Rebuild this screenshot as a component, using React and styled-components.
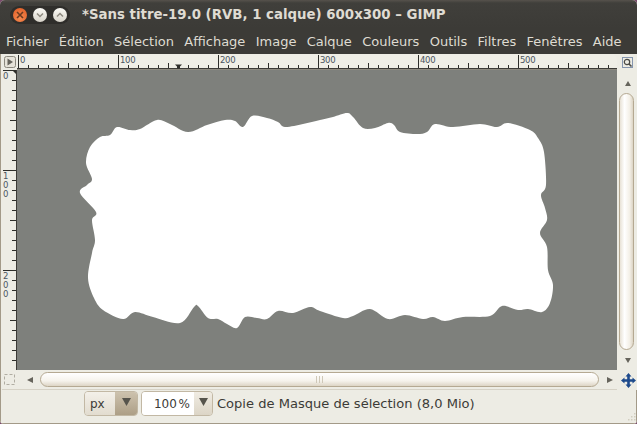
import React from 'react'
import styled, { createGlobalStyle } from 'styled-components'

const GlobalStyle = createGlobalStyle`
  html, body {
    margin: 0;
    padding: 0;
    width: 637px;
    height: 424px;
    overflow: hidden;
    background: #7a4b6c;
  }
`

const Window = styled.div`
  width: 637px;
  height: 424px;
  box-sizing: border-box;
  display: flex;
  flex-direction: column;
  background: #edece4;
  border-radius: 5px 5px 4px 4px;
  overflow: hidden;
  font-family: "DejaVu Sans", sans-serif;
`

const TitleBar = styled.div`
  height: 28px;
  flex: none;
  display: flex;
  align-items: center;
  background: linear-gradient(#56524c 0, #403f3b 3px, #3c3b37 100%);
`

const WindowButtons = styled.div`
  width: 60px;
  height: 18px;
  margin-left: 10px;
  margin-top: 1px;
  border-radius: 9px;
  background: #2f2e2b;
  display: flex;
  align-items: center;
  justify-content: space-between;
  padding: 0 3px;
  box-sizing: border-box;
`

const RoundButton = styled.div`
  width: 14px;
  height: 14px;
  border-radius: 50%;
  display: flex;
  align-items: center;
  justify-content: center;
  background: ${p => p.$close
    ? 'radial-gradient(circle at 50% 70%, #f58a4f, #df5a24)'
    : 'linear-gradient(#fbfaf5, #d8d4ca)'};
`

const Title = styled.div`
  margin-left: 12px;
  margin-top: 1px;
  color: #dfdbd2;
  font-size: 13.33px;
  font-weight: bold;
  white-space: nowrap;
`

const MenuBar = styled.div`
  height: 26px;
  flex: none;
  display: flex;
  align-items: center;
  gap: 10.3px;
  padding-left: 6px;
  background: #3c3b37;
`

const MenuItem = styled.span`
  color: #dfdbd2;
  font-size: 13px;
  white-space: nowrap;
`

const Workspace = styled.div`
  display: grid;
  grid-template-columns: 15px 600px 20px;
  grid-template-rows: 16px 300px 20px;
  flex: none;
  padding-left: 2px;
  box-shadow: inset 1px 0 0 #a39a88;
`

const RulerCorner = styled.div`
  display: flex;
  align-items: center;
  justify-content: center;
`

const RulerSvg = styled.svg`
  display: block;
  font-family: "DejaVu Sans", sans-serif;
  font-size: 8.5px;
  letter-spacing: -0.3px;
`

const ZoomCell = styled.div`
  display: flex;
  align-items: center;
  justify-content: center;
`

const Canvas = styled.div`
  background: #7e807c;
  width: 600px;
  height: 300px;
`

const VScroll = styled.div`
  display: flex;
  flex-direction: column;
  align-items: center;
  padding-top: 11px;
  padding-left: 1px;
  box-sizing: border-box;
`

const VThumb = styled.div`
  width: 15px;
  height: 257px;
  margin-top: 7px;
  margin-bottom: 8px;
  margin-left: -2px;
  flex: none;
  box-sizing: border-box;
  border: 1px solid #b5a992;
  border-radius: 8px;
  background: linear-gradient(90deg, #e8e2d6, #ffffff 35%, #f3efe6 75%, #dcd4c4);
`

const QuickMask = styled.div`
  display: flex;
  align-items: center;
  justify-content: center;
  height: 20px;
  box-sizing: border-box;
  border-bottom: 1px solid #d6d2c6;
`

const HScroll = styled.div`
  display: flex;
  align-items: center;
  padding-left: 10px;
  border-bottom: 1px solid #d6d2c6;
  height: 20px;
  box-sizing: border-box;
`

const HThumb = styled.div`
  width: 559px;
  height: 15px;
  margin: 0 8px 0 7px;
  flex: none;
  box-sizing: border-box;
  border: 1px solid #b5a992;
  border-radius: 8px;
  background: linear-gradient(#ffffff, #f6f3ec 60%, #ddd5c5);
  display: flex;
  align-items: center;
  justify-content: center;
`

const Grip = styled.div`
  width: 7px;
  height: 7px;
  background: repeating-linear-gradient(90deg, #cfc8b8 0 1px, transparent 1px 3px);
`

const NavCell = styled.div`
  display: flex;
  align-items: center;
  justify-content: center;
  padding-left: 2px;
`

const StatusBar = styled.div`
  flex: 1;
  display: flex;
  align-items: flex-start;
  padding: 1px 0 0 84px;
  border-bottom: 1px solid #a39a88;
  box-shadow: inset 1px 0 0 #a39a88, inset -1px 0 0 #a39a88;
  color: #3c3b37;
  font-size: 13.05px;
`

const Combo = styled.div`
  display: flex;
  height: 25px;
  width: ${p => p.$width}px;
  margin-right: ${p => p.$gap}px;
  box-sizing: border-box;
  border: 1px solid #c2b8a4;
  border-radius: 4px;
  overflow: hidden;
`

const ComboEntry = styled.div`
  flex: 1;
  display: flex;
  align-items: center;
  justify-content: ${p => (p.$right ? 'flex-end' : 'flex-start')};
  padding: 0 4px 0 5px;
  background: ${p => (p.$right ? '#ffffff' : 'linear-gradient(#f3f0e9, #e2dccf)')};
  font-size: 12px;
  word-spacing: -2px;
  white-space: nowrap;
`

const ComboArrow = styled.div`
  width: ${p => p.$width}px;
  display: flex;
  align-items: center;
  justify-content: center;
  padding-bottom: 4px;
  box-sizing: border-box;
  background: ${p => (p.$dark
    ? 'linear-gradient(#cdc2ae, #ad9f86)'
    : 'linear-gradient(#f0ece3, #dcd5c6)')};
`

const StatusText = styled.div`
  line-height: 25px;
  white-space: nowrap;
`

const ResizeGrip = styled.svg`
  margin-left: auto;
  align-self: flex-end;
  flex: none;
`

// outline of the selection, in page coordinates
const BLOB = [
  [80, 193], [87, 185], [92, 179], [86, 163], [90, 147], [100, 137], [110, 135], [117, 127],
  [130, 130], [140, 129], [157, 120], [170, 124], [188, 132], [207, 125], [225, 120], [235, 121],
  [243, 127], [252, 116], [267, 118], [278, 122], [285, 127], [303, 124], [320, 120], [333, 117],
  [347, 113], [353, 117], [363, 128], [375, 128], [388, 123], [394, 125], [400, 132], [417, 134],
  [427, 132], [435, 124], [453, 127], [480, 124], [497, 127], [508, 123], [530, 130], [538, 138],
  [544, 152], [546, 185], [541, 195], [545, 208], [547, 220], [540, 233], [547, 247], [548, 270],
  [553, 285], [550, 303], [542, 312], [528, 309], [518, 310], [502, 306], [490, 316], [463, 317],
  [445, 321], [433, 317], [423, 319], [405, 315], [388, 319], [370, 309], [353, 316], [343, 318],
  [320, 311], [310, 307], [293, 313], [278, 311], [267, 319], [257, 318], [245, 317], [237, 328],
  [227, 324], [218, 319], [208, 318], [198, 306], [194, 307], [180, 323], [153, 317], [135, 312],
  [123, 319], [103, 310], [94, 298], [88, 278], [92, 253], [95, 240], [92, 220], [96, 212],
]

const smoothPath = pts => {
  const n = pts.length
  let d = `M${pts[0][0]} ${pts[0][1]}`
  for (let i = 0; i < n; i++) {
    const p0 = pts[(i - 1 + n) % n]
    const p1 = pts[i]
    const p2 = pts[(i + 1) % n]
    const p3 = pts[(i + 2) % n]
    const c1 = [p1[0] + (p2[0] - p0[0]) / 6, p1[1] + (p2[1] - p0[1]) / 6]
    const c2 = [p2[0] - (p3[0] - p1[0]) / 6, p2[1] - (p3[1] - p1[1]) / 6]
    d += `C${c1[0].toFixed(1)} ${c1[1].toFixed(1)} ${c2[0].toFixed(1)} ${c2[1].toFixed(1)} ${p2[0]} ${p2[1]}`
  }
  return d + 'Z'
}

const range = (n, step) => Array.from({ length: n }, (_, i) => i * step)

const TopRuler = () => (
  <RulerSvg width="600" height="16">
    <path d="M0.5 16V0.5H594Q600 0.5 600 6V16" fill="#efeee6" stroke="none" />
    {range(60, 10).map(v => (
      <line
        key={v}
        x1={v + 1.5}
        x2={v + 1.5}
        y1={v % 100 === 0 ? 1 : v % 50 === 0 ? 9 : 11}
        y2="14"
        stroke="#2e2e2a"
      />
    ))}
    <rect x="0" y="14" width="600" height="1" fill="#3c3b37" />
    <rect x="0" y="15" width="600" height="1" fill="#8d8a80" />
    {range(6, 100).map(v => (
      <text key={v} x={v + 3} y="9" fill="#4b5560">{v}</text>
    ))}
    <path d="M158 10.5h7l-2 2v2h-3v-2z" fill="#2e2e2a" />
  </RulerSvg>
)

const LeftRuler = () => (
  <RulerSvg width="15" height="300">
    {range(30, 10).map(v => (
      <line
        key={v}
        x1={v % 100 === 0 ? 1 : v % 50 === 0 ? 8 : 10}
        x2="14"
        y1={v + 0.5}
        y2={v + 0.5}
        stroke="#2e2e2a"
      />
    ))}
    <rect x="14" y="0" width="1" height="300" fill="#3c3b37" />
    {range(3, 100).map(v => (
      String(v).split('').map((c, i) => (
        <text key={i} x="1" y={v + 9 + i * 9} fill="#4b5560">{c}</text>
      ))
    ))}
    <path d="M11 1h3v3z" fill="#2e2e2a" />
  </RulerSvg>
)

const ScrollArrow = ({ dir }) => {
  const d = {
    up: 'M0 5L3 0L6 5Z',
    down: 'M0 0H6L3 5Z',
    left: 'M6 0V6L0 3Z',
    right: 'M0 0V6L6 3Z',
  }[dir]
  const tall = dir === 'left' || dir === 'right'
  return (
    <svg width="6" height={tall ? 6 : 5} style={{ flex: 'none' }}>
      <path d={d} fill="#66645c" />
    </svg>
  )
}

const MoveIcon = () => (
  <svg width="15" height="15" viewBox="0 0 15 15">
    <path
      d="M7.5 0L10.5 3.5H8.8V6.2H11.5V4.5L15 7.5L11.5 10.5V8.8H8.8V11.5H10.5L7.5 15L4.5 11.5H6.2V8.8H3.5V10.5L0 7.5L3.5 4.5V6.2H6.2V3.5H4.5Z"
      fill="#1d4a8c"
    />
  </svg>
)

const menus = ['Fichier', 'Édition', 'Sélection', 'Affichage', 'Image', 'Calque', 'Couleurs', 'Outils', 'Filtres', 'Fenêtres', 'Aide']

export default function App() {
  return (
    <>
      <GlobalStyle />
      <Window>
        <TitleBar>
          <WindowButtons>
            <RoundButton $close>
              <svg width="8" height="8" viewBox="0 0 8 8">
                <path d="M1 1L7 7M7 1L1 7" stroke="#6b3a20" strokeWidth="1.6" />
              </svg>
            </RoundButton>
            <RoundButton>
              <svg width="8" height="6" viewBox="0 0 8 6">
                <path d="M1 1.5L4 4.5L7 1.5" stroke="#8d897f" strokeWidth="1.5" fill="none" />
              </svg>
            </RoundButton>
            <RoundButton>
              <svg width="8" height="6" viewBox="0 0 8 6">
                <path d="M1 4.5L4 1.5L7 4.5" stroke="#8d897f" strokeWidth="1.5" fill="none" />
              </svg>
            </RoundButton>
          </WindowButtons>
          <Title>*Sans titre-19.0 (RVB, 1 calque) 600x300 – GIMP</Title>
        </TitleBar>
        <MenuBar>
          {menus.map(m => <MenuItem key={m}>{m}</MenuItem>)}
        </MenuBar>
        <Workspace>
          <RulerCorner>
            <svg width="12" height="12" viewBox="0 0 12 12">
              <rect x="0.5" y="0.5" width="11" height="11" rx="2" fill="#e6e3d9" stroke="#8a877d" />
              <path d="M3.5 2.5L9 6L3.5 9.5Z" fill="#66645c" />
            </svg>
          </RulerCorner>
          <TopRuler />
          <ZoomCell>
            <svg width="11" height="11" viewBox="0 0 11 11">
              <rect x="0.5" y="0.5" width="10" height="10" fill="none" stroke="#1d3f78" strokeDasharray="1 1" />
              <circle cx="5" cy="5" r="2.7" fill="none" stroke="#4a4a46" strokeWidth="1.2" />
              <path d="M7 7L9.5 9.5" stroke="#4a4a46" strokeWidth="1.6" />
            </svg>
          </ZoomCell>
          <LeftRuler />
          <Canvas>
            <svg width="600" height="300" viewBox="17 70 600 300" style={{ display: 'block' }}>
              <path d={smoothPath(BLOB)} fill="#ffffff" />
            </svg>
          </Canvas>
          <VScroll>
            <ScrollArrow dir="up" />
            <VThumb />
            <ScrollArrow dir="down" />
          </VScroll>
          <QuickMask>
            <svg width="11" height="11" viewBox="0 0 11 11">
              <rect x="0.5" y="0.5" width="10" height="10" fill="none" stroke="#b0ada2" strokeDasharray="3 2" />
            </svg>
          </QuickMask>
          <HScroll>
            <ScrollArrow dir="left" />
            <HThumb><Grip /></HThumb>
            <ScrollArrow dir="right" />
          </HScroll>
          <NavCell><MoveIcon /></NavCell>
        </Workspace>
        <StatusBar>
          <Combo $width={54} $gap={3}>
            <ComboEntry>px</ComboEntry>
            <ComboArrow $width={22} $dark>
              <svg width="9" height="8" viewBox="0 0 9 8"><path d="M0 0H9L4.5 8Z" fill="#56544c" /></svg>
            </ComboArrow>
          </Combo>
          <Combo $width={72} $gap={4}>
            <ComboEntry $right>100 %</ComboEntry>
            <ComboArrow $width={18}>
              <svg width="9" height="8" viewBox="0 0 9 8"><path d="M0 0H9L4.5 8Z" fill="#56544c" /></svg>
            </ComboArrow>
          </Combo>
          <StatusText>Copie de Masque de sélection (8,0 Mio)</StatusText>
          <ResizeGrip width="10" height="12" viewBox="0 0 10 12">
            {[[7, 2], [4, 5], [7, 5], [1, 8], [4, 8], [7, 8]].map(([x, y]) => (
              <rect key={`${x}-${y}`} x={x} y={y} width="1.5" height="1.5" fill="#d2cdbf" />
            ))}
          </ResizeGrip>
        </StatusBar>
      </Window>
    </>
  )
}
